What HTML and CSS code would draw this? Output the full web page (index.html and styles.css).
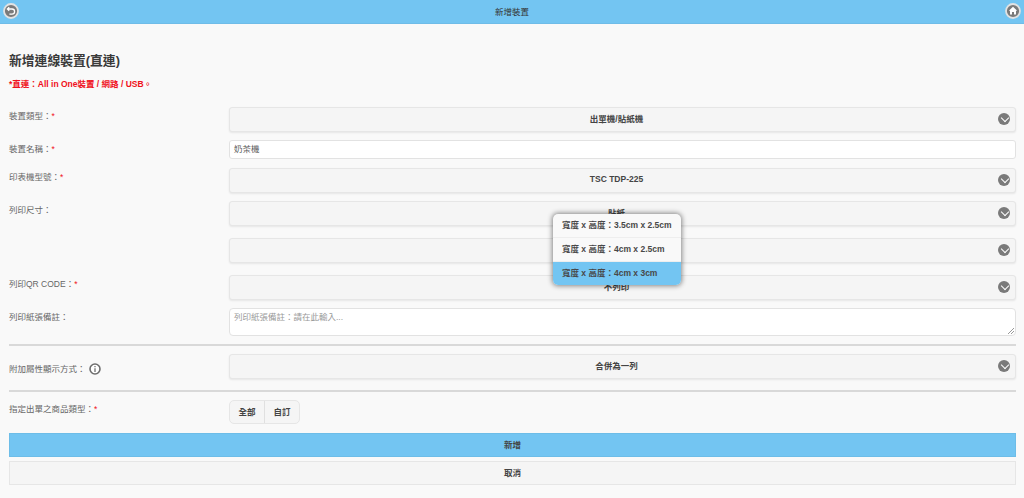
FILE: index.html
```html
<!DOCTYPE html>
<html lang="zh-Hant">
<head>
<meta charset="utf-8">
<title>新增裝置</title>
<link rel="stylesheet" href="styles.css">
</head>
<body>
<header class="topbar">
  <span class="round-icon">
    <svg viewBox="0 0 16 16" width="16" height="16"><circle cx="8" cy="8" r="7" fill="#7a7a7a" stroke="#e2e2e2" stroke-width="1.8"/><path d="M6.2 4.2 L4.4 6 L6.2 7.8 M4.8 6 H9 A2.6 2.6 0 0 1 9 11.2 H6.4" fill="none" stroke="#fff" stroke-width="1.3"/></svg>
  </span>
  <span class="topbar-title">新增裝置</span>
  <span class="round-icon">
    <svg viewBox="0 0 16 16" width="16" height="16"><circle cx="8" cy="8" r="7" fill="#7a7a7a" stroke="#e2e2e2" stroke-width="1.8"/><path d="M8 3.8 L12.2 7.8 H11 V11.6 H9 V9 H7 V11.6 H5 V7.8 H3.8 Z" fill="#fff"/></svg>
  </span>
</header>
<main class="page">
  <h1 class="title">新增連線裝置(直連)</h1>
  <p class="notice">*直連：All in One裝置 / 網路 / USB。</p>

  <div class="row row-type">
    <label class="label">裝置類型：<b class="req">*</b></label>
    <div class="select">出單機/貼紙機<span class="chev"></span></div>
  </div>
  <div class="row row-name">
    <label class="label">裝置名稱：<b class="req">*</b></label>
    <div class="input">奶茶機</div>
  </div>
  <div class="row row-model">
    <label class="label">印表機型號：<b class="req">*</b></label>
    <div class="select">TSC TDP-225<span class="chev"></span></div>
  </div>
  <div class="row row-size">
    <label class="label">列印尺寸：</label>
    <div class="stack">
      <div class="select">貼紙<span class="chev"></span></div>
      <div class="select"><span class="chev"></span></div>
    </div>
  </div>
  <div class="row row-qr">
    <label class="label">列印QR CODE：<b class="req">*</b></label>
    <div class="select">不列印<span class="chev"></span></div>
  </div>
  <div class="row row-note">
    <label class="label">列印紙張備註：</label>
    <div class="textarea">列印紙張備註：請在此輸入...
      <svg class="grip" viewBox="0 0 6 6" width="6" height="6"><path d="M0 6 L6 0 M3 6 L6 3" stroke="#999" stroke-width="1"/></svg>
    </div>
  </div>
  <hr class="rule">
  <div class="row row-attr">
    <label class="label label-info">附加屬性顯示方式：
      <svg class="info" viewBox="0 0 12 12" width="12" height="12"><circle cx="6" cy="6" r="5" fill="#fff" stroke="#6e6e6e" stroke-width="1.6"/><path d="M6 5.2 V9 M6 3 V4.2" stroke="#666" stroke-width="1.2"/></svg>
    </label>
    <div class="select">合併為一列<span class="chev"></span></div>
  </div>
  <hr class="rule rule-wide">
  <div class="row row-cat">
    <label class="label">指定出單之商品類型：<b class="req">*</b></label>
    <div class="btn-group"><span class="seg">全部</span><span class="seg">自訂</span></div>
  </div>
  <div class="action primary">新增</div>
  <div class="action">取消</div>
</main>
<ul class="popup">
  <li class="popup-item">寬度 x 高度：3.5cm x 2.5cm</li>
  <li class="popup-item">寬度 x 高度：4cm x 2.5cm</li>
  <li class="popup-item active">寬度 x 高度：4cm x 3cm</li>
</ul>
</body>
</html>
```
FILE: styles.css
```css
* { box-sizing: border-box; }
html, body { margin: 0; padding: 0; }
body {
  width: 1024px;
  height: 498px;
  overflow: hidden;
  background: #f9f9f9;
  color: #333;
  font-family: "Liberation Sans", "Noto Sans CJK TC", sans-serif;
  font-size: 8.5px;
  position: relative;
}
.topbar {
  height: 24px;
  background: #73c5f2;
  border-bottom: 1px solid #6fbce8;
  display: flex;
  align-items: center;
  justify-content: space-between;
  padding: 0 3px 2px;
}
.topbar-title { font-weight: 400; color: #333; }
.round-icon { display: flex; width: 16px; height: 16px; }
.page { padding: 0 8px 0 9px; }
.title {
  margin: 0;
  padding-top: 28px;
  font-size: 12.8px;
  line-height: 18px;
  font-weight: 700;
  color: #3a3a3a;
}
.notice {
  margin: 8px 0 0;
  font-size: 8.5px;
  line-height: 12px;
  font-weight: 700;
  color: #f01020;
}
.row { display: grid; grid-template-columns: 220px 1fr; }
.row-type { margin-top: 17px; }
.row-name { margin-top: 8px; }
.row-model { margin-top: 9px; }
.row-size { margin-top: 8px; }
.row-qr { margin-top: 12px; }
.row-note { margin-top: 8px; }
.row-attr { margin-top: 8px; }
.row-cat { margin-top: 8px; }
.label { color: #666; line-height: 12px; padding-top: 3px; }
.label-info { display: flex; align-items: center; gap: 3px; padding-top: 6px; height: 24px; }
.req { color: #f01020; font-weight: 400; }
.stack { display: flex; flex-direction: column; gap: 12px; }
.select {
  height: 25px;
  padding: 0 12px 3px 0;
  border: 1px solid #e6e6e6;
  border-radius: 3px;
  background: #f5f5f5;
  box-shadow: 0 1px 2px rgba(0,0,0,.08);
  display: flex;
  align-items: center;
  justify-content: center;
  font-weight: 700;
  color: #444;
  position: relative;
}
.chev {
  position: absolute;
  right: 5px;
  top: 5px;
  width: 12px;
  height: 12px;
  border-radius: 50%;
  background: #7a7a7a;
}
.chev::after {
  content: "";
  position: absolute;
  left: 3.5px;
  top: 2.4px;
  width: 5px;
  height: 5px;
  border-right: 1.5px solid #fff;
  border-bottom: 1.5px solid #fff;
  transform: rotate(45deg);
}
.input {
  height: 19px;
  background: #fff;
  border: 1px solid #e2e2e2;
  border-radius: 3px;
  padding: 0 4px;
  line-height: 16px;
  color: #555;
}
.textarea {
  height: 28px;
  background: #fff;
  border: 1px solid #e2e2e2;
  border-radius: 4px;
  padding: 2px 4px;
  line-height: 12px;
  color: #999;
  position: relative;
}
.grip { position: absolute; right: 1px; bottom: 1px; }
.rule { margin: 8px 0 0; border: 0; height: 2px; background: #d9d9d9; }
.rule-wide { margin-top: 11px; }
.btn-group {
  width: 71px;
  height: 24px;
  display: flex;
  border: 1px solid #e6e6e6;
  border-radius: 5px;
  background: #f5f5f5;
}
.seg {
  flex: 1;
  display: flex;
  align-items: center;
  justify-content: center;
  padding-bottom: 2px;
  font-weight: 700;
  color: #444;
}
.seg + .seg { border-left: 1px solid #e0e0e0; }
.action {
  height: 24px;
  margin-top: 4px;
  padding-bottom: 3px;
  border: 1px solid #e6e6e6;
  background: #f5f5f5;
  display: flex;
  align-items: center;
  justify-content: center;
  font-weight: 700;
  color: #444;
}
.action.primary {
  margin-top: 9px;
  background: #73c5f2;
  border-color: #6dbde8;
}
.popup {
  position: absolute;
  left: 553px;
  top: 214px;
  width: 128px;
  margin: 0;
  padding: 0;
  list-style: none;
  background: #f9f9f9;
  border-radius: 5px;
  overflow: hidden;
  box-shadow: 0 0 5px 1px rgba(0,0,0,.45);
}
.popup-item {
  height: 24px;
  line-height: 22px;
  padding-left: 9px;
  font-weight: 700;
  color: #484848;
  border-bottom: 1px solid #eee;
}
.popup-item.active { background: #73c5f2; border-bottom: 0; height: 23px; }
```
